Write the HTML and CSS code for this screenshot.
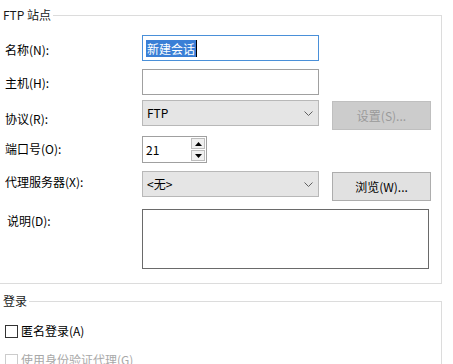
FILE: index.html
```html
<!DOCTYPE html>
<html lang="zh-CN">
<head>
<meta charset="utf-8">
<title>FTP 站点</title>
<link rel="stylesheet" href="styles.css">
</head>
<body>
<fieldset class="group">
  <legend class="group-title">FTP 站点</legend>
  <div class="row row-name">
    <label class="lbl">名称(N):</label>
    <div class="input input-focus"><span class="sel">新建会话</span><span class="caret"></span></div>
  </div>
  <div class="row row-host">
    <label class="lbl">主机(H):</label>
    <div class="input"></div>
  </div>
  <div class="row row-proto">
    <label class="lbl">协议(R):</label>
    <div class="combo"><span>FTP</span><svg class="chev" width="9" height="5" viewBox="0 0 9 5"><path d="M0.5 0.5 L4.5 4.5 L8.5 0.5" fill="none" stroke="#606060" stroke-width="1"/></svg></div>
    <button class="btn btn-disabled">设置(S)...</button>
  </div>
  <div class="row row-port">
    <label class="lbl">端口号(O):</label>
    <div class="spin">
      <span class="spin-val">21</span>
      <div class="spin-btns">
        <span class="spin-b"><svg width="7" height="4" viewBox="0 0 7 4"><path d="M3.5 0 L7 4 L0 4 Z" fill="#000"/></svg></span>
        <span class="spin-b"><svg width="7" height="4" viewBox="0 0 7 4"><path d="M0 0 L7 0 L3.5 4 Z" fill="#000"/></svg></span>
      </div>
    </div>
  </div>
  <div class="row row-proxy">
    <label class="lbl">代理服务器(X):</label>
    <div class="combo"><span>&lt;无&gt;</span><svg class="chev" width="9" height="5" viewBox="0 0 9 5"><path d="M0.5 0.5 L4.5 4.5 L8.5 0.5" fill="none" stroke="#606060" stroke-width="1"/></svg></div>
    <button class="btn">浏览(W)...</button>
  </div>
  <div class="row row-desc">
    <label class="lbl lbl-desc">说明(D):</label>
    <div class="textarea"></div>
  </div>
</fieldset>
<fieldset class="group group-login">
  <legend class="group-title">登录</legend>
  <div class="check-row">
    <span class="box"></span><span class="check-text">匿名登录(A)</span>
  </div>
  <div class="check-row check-disabled">
    <span class="box"></span><span class="check-text">使用身份验证代理(G)</span>
  </div>
</fieldset>
</body>
</html>
```
FILE: styles.css
```css
html, body {
  margin: 0;
  padding: 0;
  background: #ffffff;
  overflow: hidden;
}
body {
  font-family: "Noto Sans CJK SC", "Microsoft YaHei", sans-serif;
  font-size: 12px;
  line-height: 16px;
  color: #000;
  width: 453px;
  height: 364px;
}
.group {
  margin: 7px 11px 0 0;
  padding: 12px 0 14px 0;
  border: 1px solid #dcdcdc;
  border-left: none;
  min-width: 0;
}
.group-title {
  padding: 0 2px 0 3px;
  line-height: 16px;
  color: #1a1a1a;
}
.row {
  display: flex;
  align-items: flex-start;
}
.lbl {
  box-sizing: border-box;
  width: 142px;
  padding-left: 5px;
  flex: none;
}
.lbl-desc { padding-left: 7px; }
.row-name .lbl { margin-top: 7px; }
.row-host { margin-top: 8px; }
.row-host .lbl { margin-top: 6px; }
.row-proto { margin-top: 5px; }
.row-proto .lbl { margin-top: 11px; }
.row-port { margin-top: 6px; }
.row-port .lbl { margin-top: 5px; }
.row-proxy { margin-top: 8px; }
.row-proxy .lbl { margin-top: 3px; }
.row-desc { margin-top: 8px; }
.row-desc .lbl { margin-top: 4px; }

.input {
  box-sizing: border-box;
  width: 177px;
  height: 26px;
  border: 1px solid #a0a0a0;
  background: #fff;
  display: flex;
  align-items: center;
  padding-left: 3px;
}
.input-focus { border-color: #4a90d9; }
.sel {
  background: #3a7fd6;
  color: #fff;
  line-height: 17px;
  padding: 0 1px;
}
.caret {
  width: 1px;
  height: 17px;
  background: #000;
}
.combo {
  box-sizing: border-box;
  width: 177px;
  height: 26px;
  border: 1px solid #b8b8b8;
  background: #e5e5e5;
  display: flex;
  align-items: center;
  justify-content: space-between;
  padding: 0 5px 0 4px;
}
.btn {
  box-sizing: border-box;
  width: 99px;
  height: 29px;
  margin: 1px 0 0 13px;
  border: 1px solid #adadad;
  background: #e1e1e1;
  font: inherit;
  color: #000;
  padding: 0;
}
.btn-disabled {
  background: #cccccc;
  border-color: #bfbfbf;
  color: #9a9a9a;
}
.spin {
  box-sizing: border-box;
  width: 65px;
  height: 27px;
  border: 1px solid #a0a0a0;
  display: flex;
  align-items: center;
  justify-content: space-between;
  padding: 0 1px 0 3px;
}
.spin-btns {
  display: flex;
  flex-direction: column;
  gap: 1px;
}
.spin-b {
  box-sizing: border-box;
  width: 14px;
  height: 11px;
  border: 1px solid #bdbdbd;
  background: #f0f0f0;
  display: flex;
  align-items: center;
  justify-content: center;
}
.textarea {
  box-sizing: border-box;
  width: 287px;
  height: 60px;
  border: 1px solid #6a6a6a;
  background: #fff;
}
.group-login {
  margin-top: 9px;
  padding: 14px 0 20px 0;
}
.check-row {
  display: flex;
  align-items: center;
  padding-left: 5px;
  height: 16px;
}
.check-row + .check-row { margin-top: 13px; }
.box {
  box-sizing: border-box;
  width: 13px;
  height: 13px;
  border: 1px solid #333;
  background: #fff;
  margin-right: 3px;
}
.check-disabled .box { border-color: #cccccc; }
.check-disabled .check-text { color: #a8a8a8; }
```
